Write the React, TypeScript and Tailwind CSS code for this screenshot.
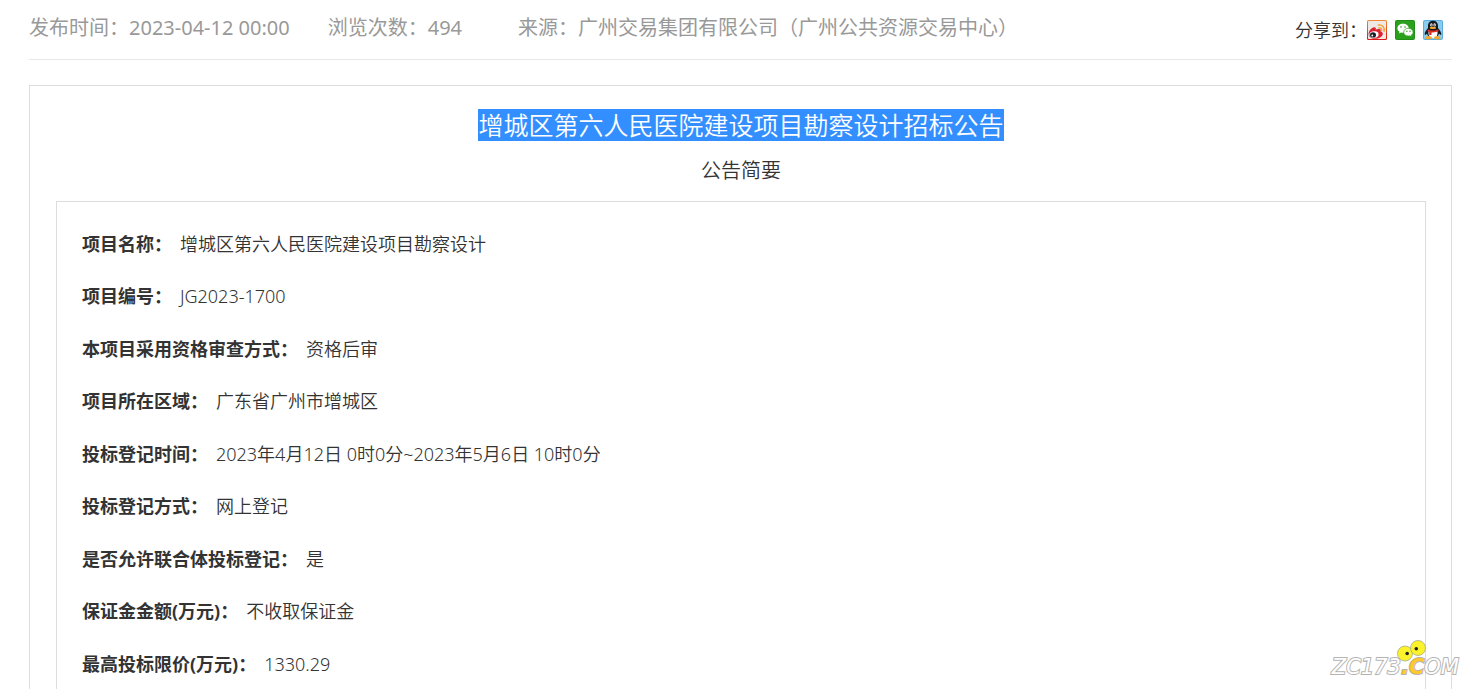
interface Field {
  label: string;
  value: string;
}

const fields: Field[] = [
  { label: "项目名称：", value: "增城区第六人民医院建设项目勘察设计" },
  { label: "项目编号：", value: "JG2023-1700" },
  { label: "本项目采用资格审查方式：", value: "资格后审" },
  { label: "项目所在区域：", value: "广东省广州市增城区" },
  { label: "投标登记时间：", value: "2023年4月12日 0时0分~2023年5月6日 10时0分" },
  { label: "投标登记方式：", value: "网上登记" },
  { label: "是否允许联合体投标登记：", value: "是" },
  { label: "保证金金额(万元)：", value: "不收取保证金" },
  { label: "最高投标限价(万元)：", value: "1330.29" },
];

function WeiboIcon() {
  return (
    <svg viewBox="0 0 20 20" className="size-5" aria-hidden="true">
      <defs>
        <linearGradient id="weibo-edge" x1="0" y1="0" x2="0" y2="1">
          <stop offset="0" stopColor="#f28a35" />
          <stop offset="1" stopColor="#dc1414" />
        </linearGradient>
      </defs>
      <rect width="20" height="20" rx="1.5" fill="url(#weibo-edge)" />
      <rect x="1" y="1" width="18" height="18" rx="0.8" fill="#efe9e6" />
      <path
        d="M1.600 14.200C1.600 11 4.500 7.500 7.300 7.300c1.700-.1 1.700 1.300 1.300 2.200 1.800-.7 5-1.200 5.200.9 0 .4-.1.7-.2 1 1.500.4 2.500 1.200 2.200 2.900-.5 2.700-4 4.500-7.600 4.500C4.600 18.800 1.600 17 1.600 14.200z"
        fill="#dc2231"
      />
      <ellipse cx="7" cy="14.600" rx="4.600" ry="3.300" fill="#fff" transform="rotate(-8 7 14.600)" />
      <ellipse cx="6" cy="14.900" rx="3" ry="2.600" fill="#16202a" />
      <circle cx="5.300" cy="15.500" r="0.900" fill="#fff" />
      <path
        d="M11.500 5.100c3.500-.8 6.600 2.300 5.500 6.100M12 8c1.800-.4 3.100 1 2.500 2.800"
        fill="none"
        stroke="#f2a43c"
        strokeWidth="1.500"
        strokeLinecap="round"
      />
    </svg>
  );
}

function WechatIcon() {
  return (
    <svg viewBox="0 0 20 20" className="size-5" aria-hidden="true">
      <rect width="20" height="20" rx="2" fill="#1f8f16" />
      <rect x="1" y="1" width="18" height="18" rx="1.200" fill="#2ba01c" />
      <path
        d="M8 3.800c-3.200 0-5.600 2-5.600 4.500 0 1.500.8 2.700 2.100 3.500L4 13.600l2.200-1.100c.6.1 1.200.2 1.800.2 3.200 0 5.700-2 5.700-4.400S11.200 3.800 8 3.800z"
        fill="#fff"
      />
      <path
        d="M13.400 8.300c-2.700 0-4.700 1.700-4.700 3.900s2 3.800 4.700 3.800c.5 0 1-.1 1.500-.2l1.900 1-.5-1.700c1.100-.7 1.800-1.700 1.800-2.900 0-2.200-2.100-3.900-4.700-3.900z"
        fill="#fff"
        stroke="#2ba01c"
        strokeWidth="0.700"
      />
      <g fill="#2ba01c">
        <circle cx="6" cy="7" r="0.800" />
        <circle cx="10" cy="7" r="0.800" />
        <circle cx="11.900" cy="11.200" r="0.700" />
        <circle cx="15" cy="11.200" r="0.700" />
      </g>
    </svg>
  );
}

function QQIcon() {
  return (
    <svg viewBox="0 0 20 20" className="size-5" aria-hidden="true">
      <rect width="20" height="20" rx="2" fill="#58aee3" />
      <rect x="1" y="1" width="18" height="18" rx="1.200" fill="#8acbf0" />
      <path
        d="M10 .8c-3.200 0-5 2.200-5 5.200v2C3.500 10 1.300 12.600 1.700 14.600c.2.800 1.400.1 2.300-1.100.3 1.200.8 2 1.500 2.800h9c.7-.8 1.200-1.600 1.500-2.800.9 1.200 2.100 1.900 2.300 1.100.4-2-1.800-4.600-3.300-6.600V6c0-3-1.800-5.200-5-5.200z"
        fill="#17191c"
      />
      <path d="M5.600 11h8.800c.7 4-1 7-4.400 7s-5.100-3-4.400-7z" fill="#fff" />
      <ellipse cx="5.700" cy="17.700" rx="3.200" ry="1.600" fill="#f3a62b" />
      <ellipse cx="14.300" cy="17.700" rx="3.200" ry="1.600" fill="#f3a62b" />
      <ellipse cx="8.400" cy="4.900" rx="1.200" ry="1.700" fill="#fff" />
      <ellipse cx="11.600" cy="4.900" rx="1.200" ry="1.700" fill="#fff" />
      <circle cx="8.700" cy="5.100" r="0.600" fill="#111" />
      <circle cx="11.300" cy="5.100" r="0.600" fill="#111" />
      <ellipse cx="10" cy="7.900" rx="3.200" ry="1.100" fill="#f3a62b" />
      <path d="M4.800 9.300c3 1.600 7.400 1.600 10.400 0l.5 1.800c-2.500 1.300-5 1.500-7.200 1.300v2.500H6.200V12l-1.800-.9z" fill="#e02a22" />
    </svg>
  );
}

function Watermark() {
  return (
    <div className="pointer-events-none absolute right-[18px] bottom-2 font-['DejaVu_Sans',sans-serif] text-[21px] leading-7 font-normal italic select-none">
      <span className="text-white [-webkit-text-stroke:2px_#b4b4b4] [paint-order:stroke_fill]">
        ZC173
        <span className="font-bold text-[#ffc82c]">.C</span>
        OM
      </span>
      <svg viewBox="0 0 30 24" className="absolute -top-[15px] right-8 h-6 w-[30px]" aria-hidden="true">
        <g fill="#fbf32a" stroke="#a9a78a" strokeWidth="0.800">
          <circle cx="8" cy="15.500" r="7.500" />
          <circle cx="21" cy="10" r="7.500" />
        </g>
        <circle cx="10.200" cy="15.500" r="1.800" fill="#222" />
        <circle cx="19.300" cy="10.700" r="1.800" fill="#222" />
      </svg>
    </div>
  );
}

export default function App() {
  return (
    <div className="relative h-screen overflow-hidden bg-white pr-[25px] pl-[29px] font-['Noto_Sans','Noto_Sans_CJK_SC',sans-serif] font-[350] text-[#333]">
      <header className="flex h-[60px] items-center justify-between border-b border-[#e8e8e8] pb-1">
        <div className="flex text-xl font-normal whitespace-nowrap text-[#999]">
          <span className="mr-[38px]">发布时间：2023-04-12 00:00</span>
          <span className="mr-14">浏览次数：494</span>
          <span>来源：广州交易集团有限公司（广州公共资源交易中心）</span>
        </div>
        <div className="flex items-center pt-1 pr-[9px] text-lg whitespace-nowrap">
          <span>分享到：</span>
          <div className="flex gap-2">
            <a href="#weibo" aria-label="新浪微博">
              <WeiboIcon />
            </a>
            <a href="#wechat" aria-label="微信">
              <WechatIcon />
            </a>
            <a href="#qq" aria-label="QQ好友">
              <QQIcon />
            </a>
          </div>
        </div>
      </header>

      <main className="mt-[25px] border border-[#ddd] pt-[23px] pr-[25px] pb-6 pl-[26px]">
        <h1 className="text-center text-[25px] leading-8">
          <span className="inline-block bg-[#338fff] text-white">
            增城区第六人民医院建设项目勘察设计招标公告
          </span>
        </h1>
        <h2 className="mt-[14px] text-center text-xl leading-8">公告简要</h2>

        <dl className="mt-[14px] border border-[#ddd] px-[25px] pt-[15px] pb-6 text-lg">
          {fields.map((field) => (
            <div
              key={field.label}
              className="flex items-center gap-2 odd:h-[53px] even:h-[52px]"
            >
              <dt className="font-bold">{field.label}</dt>
              <dd>{field.value}</dd>
            </div>
          ))}
        </dl>
      </main>

      <Watermark />
    </div>
  );
}
